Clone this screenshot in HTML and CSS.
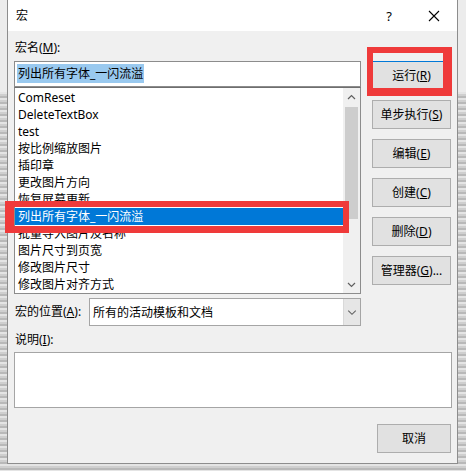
FILE: index.html
```html
<!DOCTYPE html>
<html lang="zh-CN">
<head>
<meta charset="utf-8">
<title>宏</title>
<link rel="stylesheet" href="styles.css">
</head>
<body>
<div class="screen">
  <div class="dialog">
    <div class="titlebar">
      <span class="title">宏</span>
      <span class="help">?</span>
      <span class="close">
        <svg width="12" height="12" viewBox="0 0 12 12"><path d="M1 1L11 11M11 1L1 11" stroke="#000" stroke-width="1.1" fill="none"/></svg>
      </span>
    </div>
    <div class="content">
      <div class="main">
        <div class="leftcol">
          <div class="label label-top">宏名(<u>M</u>):</div>
          <div class="input"><span class="sel">列出所有字体_一闪流溢</span></div>
          <div class="listbox">
            <ul class="items">
              <li>ComReset</li>
              <li>DeleteTextBox</li>
              <li>test</li>
              <li>按比例缩放图片</li>
              <li>插印章</li>
              <li>更改图片方向</li>
              <li>恢复屏幕更新</li>
              <li class="selected">列出所有字体_一闪流溢</li>
              <li>批量导入图片及名称</li>
              <li>图片尺寸到页宽</li>
              <li>修改图片尺寸</li>
              <li>修改图片对齐方式</li>
            </ul>
            <div class="scrollbar">
              <div class="arrow">
                <svg width="17" height="17" viewBox="0 0 17 17"><path d="M5 11L8.5 7.5L12 11" stroke="#606060" stroke-width="1.2" fill="none"/></svg>
              </div>
              <div class="track"><div class="thumb"></div></div>
              <div class="arrow">
                <svg width="17" height="17" viewBox="0 0 17 17"><path d="M5 7L8.5 10.5L12 7" stroke="#606060" stroke-width="1.2" fill="none"/></svg>
              </div>
            </div>
          </div>
        </div>
        <div class="buttons">
          <div class="btn btn-default">运行(<u>R</u>)</div>
          <div class="btn">单步执行(<u>S</u>)</div>
          <div class="btn">编辑(<u>E</u>)</div>
          <div class="btn">创建(<u>C</u>)</div>
          <div class="btn">删除(<u>D</u>)</div>
          <div class="btn">管理器(<u>G</u>)...</div>
        </div>
      </div>
      <div class="location-row">
        <div class="label">宏的位置(<u>A</u>):</div>
        <div class="combo">
          <span class="combo-text">所有的活动模板和文档</span>
          <span class="combo-btn">
            <svg width="17" height="26" viewBox="0 0 17 26"><path d="M4.5 11.5L8.5 15.5L12.5 11.5" stroke="#606060" stroke-width="1.1" fill="none"/></svg>
          </span>
        </div>
      </div>
      <div class="label label-desc">说明(<u>I</u>):</div>
      <div class="textarea"></div>
      <div class="footer">
        <div class="btn btn-cancel">取消</div>
      </div>
    </div>
  </div>
  <div class="mark mark-list"></div>
  <div class="mark mark-run"></div>
</div>
</body>
</html>
```
FILE: styles.css
```css
* { box-sizing: border-box; }
html, body { margin: 0; padding: 0; }
body {
  font-family: "Noto Sans", "Noto Sans CJK SC", sans-serif;
  font-size: 12px;
  color: #000;
}
.screen {
  position: relative;
  width: 466px;
  height: 471px;
  overflow: hidden;
  background-color: #d6d6d6;
  background-image:
    linear-gradient(180deg, #ececec 0 92px, transparent 92px),
    repeating-linear-gradient(180deg, #b9b9b9 0 2px, #e4e4e4 2px 4px, #cfcfcf 4px 6px);
}
.dialog {
  margin-left: 7px;
  width: 451px;
  height: 464px;
  border: 1px solid #8d8d8d;
  border-top: none;
  background: #f0f0f0;
  display: flex;
  flex-direction: column;
}
.titlebar {
  height: 31px;
  background: #fff;
  display: flex;
  align-items: center;
  padding-left: 8px;
  flex: none;
}
.title { font-size: 12px; line-height: 16px; }
.help {
  margin-left: auto;
  font-size: 13px;
  line-height: 16px;
  width: 12px;
  text-align: center;
  margin-right: 33px;
}
.close {
  width: 12px;
  height: 12px;
  margin-right: 17px;
  display: flex;
}
.content {
  padding: 0 5px 0 6px;
  display: flex;
  flex-direction: column;
}
.main {
  display: flex;
  gap: 11px;
}
.leftcol {
  width: 347px;
  display: flex;
  flex-direction: column;
}
.label { line-height: 16px; white-space: nowrap; }
.label-top { margin-top: 9px; padding-left: 1px; }
.input {
  margin-top: 5px;
  height: 26px;
  border: 1px solid #8c8c8c;
  background: #fff;
  padding: 2px 0 0 2px;
}
.sel {
  display: inline-block;
  background: #99c9ef;
  line-height: 19px;
  padding: 0 1px;
}
.listbox {
  height: 207px;
  border: 1px solid #8c8c8c;
  border-top-color: #6e6e6e;
  background: #fff;
  display: flex;
  overflow: hidden;
}
.items {
  list-style: none;
  margin: 0;
  padding: 1px 0 0 0;
  flex: 1;
  overflow: hidden;
}
.items li {
  height: 17px;
  line-height: 17px;
  padding-left: 3px;
  white-space: nowrap;
}
.items li.selected {
  background: #0078d7;
  color: #fff;
}
.scrollbar {
  width: 17px;
  flex: none;
  background: #f0f0f0;
  display: flex;
  flex-direction: column;
}
.arrow { height: 17px; flex: none; display: flex; }
.track { flex: 1; padding: 2px 2px 0 2px; }
.thumb {
  height: 112px;
  background: #cdcdcd;
}
.buttons {
  width: 79px;
  display: flex;
  flex-direction: column;
  gap: 10px;
  padding-top: 30px;
}
.btn {
  height: 29px;
  border: 1px solid #adadad;
  background: #e1e1e1;
  display: flex;
  align-items: center;
  justify-content: center;
  white-space: nowrap;
  line-height: 16px;
}
.btn-default { border-color: #0078d7; }
.location-row {
  margin-top: 4px;
  width: 347px;
  display: flex;
  align-items: center;
  gap: 8px;
}
.location-row .label { padding-left: 1px; }
.combo {
  flex: 1;
  height: 28px;
  border: 1px solid #a5a5a5;
  background: #fff;
  display: flex;
  align-items: center;
}
.combo-text { padding-left: 3px; flex: 1; }
.combo-btn {
  width: 17px;
  height: 26px;
  background: #e6e6e6;
  border-left: 1px solid #d9d9d9;
  display: flex;
}
.label-desc { margin-top: 6px; padding-left: 1px; }
.textarea {
  margin-top: 4px;
  height: 56px;
  border: 1px solid #a5a5a5;
  background: #fff;
}
.footer {
  margin-top: 16px;
  display: flex;
  justify-content: flex-end;
  padding-right: 1px;
}
.btn-cancel { width: 74px; }
.mark {
  position: absolute;
  border-style: solid;
  border-color: #ef3a3a;
}
.mark-list {
  left: 5px;
  top: 201px;
  width: 344px;
  height: 32px;
  border-width: 6px 6px 7px 9px;
}
.mark-run {
  left: 367px;
  top: 47px;
  width: 85px;
  height: 49px;
  border-width: 6px 9px 8px 6px;
}
```
